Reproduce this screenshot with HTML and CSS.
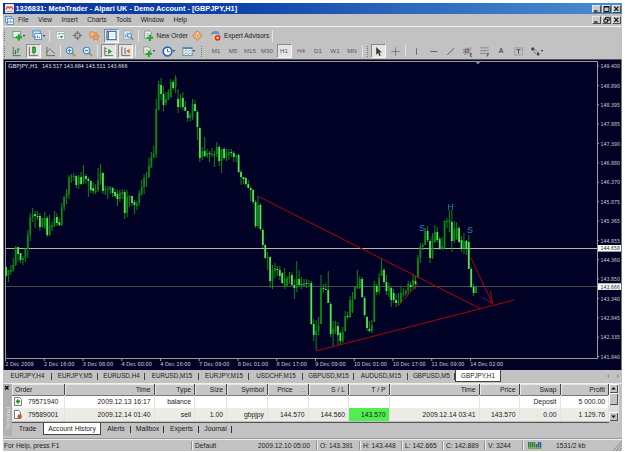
FILE: index.html
```
<!DOCTYPE html>
<html lang="en">
<head>
    <meta charset="UTF-8">
    <meta name="viewport" content="width=device-width, initial-scale=1.0">
    <title>MetaTrader - GBPJPY,H1</title>
    <link rel="stylesheet" href="styles.css">
</head>
<body>

<div class="window">

    <div class="titlebar">
        <svg class="logo" width="9" height="9" viewBox="0 0 9 9"><rect width="9" height="9" rx="1" fill="#f4e4dc"/><path d="M1 5.5Q2.5 1 4.5 4Q6.500 1 8 5.500" fill="none" stroke="#d84a3c" stroke-width="1.300"/><path d="M1.500 7.500h6" stroke="#e89080"/></svg>
        <span class="title">1326831: MetaTrader - Alpari UK - Demo Account - [GBPJPY,H1]</span>
        <span class="winbtns">
            <svg width="9" height="8" viewBox="0 0 9 8"><path d="M2 6h3.500" stroke="#000" stroke-width="1.200"/></svg>
            <svg width="9" height="8" viewBox="0 0 9 8"><path d="M2 1.500h5v5H2zM2 2h5" fill="none" stroke="#000" stroke-width=".9"/></svg>
            <svg width="9" height="8" viewBox="0 0 9 8"><path d="M2.300 1.700l4 4.300M6.300 1.700l-4 4.300" stroke="#000" stroke-width="1.100"/></svg>
        </span>
    </div>

    <div class="menubar">
        <svg class="doc" width="9" height="9" viewBox="0 0 9 9"><rect x=".5" y=".5" width="6" height="6" fill="#dcecf8" stroke="#4a8cc8" stroke-width=".8"/><rect x="2.500" y="2.500" width="6" height="6" fill="#eef6fc" stroke="#4a8cc8" stroke-width=".8"/><path d="M4 7V5M5.500 7V4M7 7V5" stroke="#4a8cc8" stroke-width=".7"/></svg>
        <span>File</span><span>View</span><span>Insert</span><span>Charts</span><span>Tools</span><span>Window</span><span>Help</span>
        <span class="winbtns">
            <svg width="9" height="8" viewBox="0 0 9 8"><path d="M2 6h3.500" stroke="#000" stroke-width="1.200"/></svg>
            <svg width="9" height="8" viewBox="0 0 9 8"><path d="M3.500 3V1.300h3.700v3H5.800M2 3.200h3.500v3H2z" fill="none" stroke="#000" stroke-width=".9"/></svg>
            <svg width="9" height="8" viewBox="0 0 9 8"><path d="M2.300 1.700l4 4.300M6.300 1.700l-4 4.300" stroke="#000" stroke-width="1.100"/></svg>
        </span>
    </div>

    <!-- standard toolbar -->
    <div class="toolbar standard">
        <i class="handle"></i>
        <span class="tool drop"><svg viewBox="0 0 12 12"><rect x="1" y="1.500" width="8" height="6.500" fill="#e8f4e8" stroke="#4a9a50" stroke-width=".8"/><path d="M7.500 4.500v7M4 8h7" stroke="#20a828" stroke-width="2.400"/></svg></span>
        <span class="tool drop"><svg viewBox="0 0 12 12"><rect x="1" y="1" width="8" height="6" fill="#cfe4f6" stroke="#3c80c0" stroke-width=".9"/><rect x="3" y="4" width="7.500" height="6.500" fill="#fff" stroke="#3c80c0" stroke-width=".9"/><path d="M4 9V7M6 9V6M8 9V7" stroke="#3c80c0"/></svg></span>
        <i class="sep"></i>
        <span class="tool"><svg viewBox="0 0 12 12"><rect x="1.500" y="1.500" width="9" height="9" fill="#fafff4" stroke="#8aa" stroke-width=".7"/><path d="M3 5l1.500-2L6 5z" fill="#20a020"/><path d="M5 6.500h4L7 9.500z" fill="#289838"/><path d="M7 4h2.500M3 8h1.500" stroke="#3878c0"/></svg></span>
        <span class="tool"><svg viewBox="0 0 12 12"><circle cx="6" cy="6" r="3" fill="none" stroke="#707070" stroke-width="1.100"/><path d="M6 .8v4M6 7.200v4M.8 6h4M7.200 6h4" stroke="#707070" stroke-width="1.100"/></svg></span>
        <span class="tool"><svg viewBox="0 0 12 12"><path d="M1 2h3l1 1h4v5H1z" fill="#f0b878" stroke="#c07030" stroke-width=".6"/><path d="M7.500 4l1.200 2.400 2.600.3-1.900 1.800.5 2.700-2.400-1.300-2.400 1.300.5-2.700-1.900-1.800 2.600-.3z" fill="#f4a060" stroke="#c06830" stroke-width=".5"/></svg></span>
        <span class="tool on"><svg viewBox="0 0 12 12"><rect x="1" y="1.500" width="10" height="9" fill="#fff" stroke="#3070b8" stroke-width="1.200"/><path d="M2.500 2v8" stroke="#3070b8" stroke-width="1.500"/><path d="M4.500 4.500h5M4.500 7h5" stroke="#b8cce0" stroke-width=".8"/></svg></span>
        <span class="tool"><svg viewBox="0 0 12 12"><rect x="1" y="1" width="7.500" height="9" fill="#e4eef6" stroke="#7aa0c0" stroke-width=".7"/><path d="M2.500 8V5M4.500 8V3" stroke="#5a90b8"/><circle cx="7" cy="6" r="2.300" fill="#c8e4f8" stroke="#4a88b8"/><path d="M8.800 8l2.200 2.500" stroke="#4a88b8" stroke-width="1.400"/></svg></span>
        <i class="sep short"></i>
        <span class="tool"><svg viewBox="0 0 12 12"><path d="M2 1h5l2 2v6H2z" fill="#f2f8f2" stroke="#6a8a6a" stroke-width=".8"/><path d="M3.500 4h3M3.500 6h2" stroke="#888" stroke-width=".7"/><path d="M7.500 5v7M4 8.500h7" stroke="#20a828" stroke-width="2.300"/></svg></span>
        <span class="label order">New Order</span>
        <span class="tool"><svg viewBox="0 0 12 12"><path d="M6 .8L11.200 6 6 11.200.8 6z" fill="#f0b070" stroke="#c87830" stroke-width=".9"/><path d="M6 2.800v1.400M6 5.200v3.800" stroke="#fff" stroke-width="1.500"/><path d="M6 5v4" stroke="#a85818" stroke-width=".6"/></svg></span>
        <span class="tool expert"><svg viewBox="0 0 12 12"><circle cx="5.500" cy="6.500" r="3.500" fill="#f0c090"/><path d="M.8 5Q2 .6 6 1Q10 1.300 10.500 5L6 4z" fill="#4a98d8"/><circle cx="8.300" cy="8.500" r="3.100" fill="#d83018"/><rect x="7.200" y="7.400" width="2.200" height="2.200" fill="#fff"/></svg></span>
        <span class="label">Expert Advisors</span>
        <i class="sep end"></i>
    </div>

    <!-- charts, timeframes and line studies toolbar -->
    <div class="toolbar charts">
        <i class="handle"></i>
        <span class="tool"><svg viewBox="0 0 12 12"><path d="M2.500 1v9.500h8" fill="none" stroke="#555" stroke-width=".9"/><path d="M5 4v5M7.500 2.500v5M7.500 3.500h2M4 7.500h1" stroke="#208038" stroke-width="1.100"/></svg></span>
        <span class="tool on"><svg viewBox="0 0 12 12"><path d="M1.500 1v9.500h9.500" fill="none" stroke="#555" stroke-width=".9"/><path d="M6.500 0v9.500" stroke="#188028"/><rect x="4.800" y="1.500" width="3.400" height="5.500" fill="#30b840" stroke="#188028" stroke-width=".7"/></svg></span>
        <span class="tool"><svg viewBox="0 0 12 12"><path d="M2 1v9.500h9" fill="none" stroke="#555" stroke-width=".9"/><path d="M2 7Q5 1.500 7 4.500T11 8" fill="none" stroke="#4a7a58"/></svg></span>
        <i class="sep short"></i>
        <span class="tool"><svg viewBox="0 0 12 12"><path d="M7.500 7.500l3.500 3.500" stroke="#b89030" stroke-width="2"/><circle cx="5" cy="5" r="3.600" fill="#e4f4ff" stroke="#3888c8" stroke-width="1.200"/><path d="M3 5h4M5 3v4" stroke="#3078b8" stroke-width="1.100"/></svg></span>
        <span class="tool"><svg viewBox="0 0 12 12"><path d="M7.500 7.500l3.500 3.500" stroke="#b89030" stroke-width="2"/><circle cx="5" cy="5" r="3.600" fill="#e4f4ff" stroke="#3888c8" stroke-width="1.200"/><path d="M3 5h4" stroke="#3078b8" stroke-width="1.100"/></svg></span>
        <i class="sep"></i>
        <span class="tool on"><svg viewBox="0 0 12 12"><path d="M2 1v9.500h9M2 3h2M2 6h2" fill="none" stroke="#555" stroke-width=".9"/><path d="M5.500 3l4.500 3-4.500 3z" fill="#28a838"/></svg></span>
        <span class="tool on"><svg viewBox="0 0 12 12"><path d="M2 1v9.500h9M5.500 2v7" fill="none" stroke="#555" stroke-width=".9"/><path d="M10.500 3L7 5.500l3.500 3z" fill="#d86828"/></svg></span>
        <i class="sep"></i>
        <span class="tool drop"><svg viewBox="0 0 12 12"><path d="M2 1h5l2 2v6H2z" fill="#f2f8f2" stroke="#6a8a6a" stroke-width=".8"/><path d="M3.500 6l1.500-2 1.500 1" fill="none" stroke="#666" stroke-width=".7"/><path d="M7.500 5v7M4 8.500h7" stroke="#20a828" stroke-width="2.200"/></svg></span>
        <span class="tool drop"><svg viewBox="0 0 12 12"><circle cx="6" cy="6" r="4.700" fill="#fff" stroke="#2868c0" stroke-width="1.900"/><path d="M6 3v3.200h2.500" fill="none" stroke="#444" stroke-width=".9"/></svg></span>
        <span class="tool drop"><svg viewBox="0 0 12 12"><rect x="1" y="1.500" width="10" height="9" fill="#eaf4fa" stroke="#4888b8" stroke-width=".9"/><path d="M1 2.500h10" stroke="#4888b8" stroke-width="1.600"/><path d="M2.500 6l2-1.500L7 6l2.500-1.500" fill="none" stroke="#d07040" stroke-width=".8"/><path d="M2.500 9l2-1.500L7 9l2.500-1.500" fill="none" stroke="#30a050" stroke-width=".8"/></svg></span>
        <i class="handle frames"></i>
        <span class="tool tf">M1</span><span class="tool tf">M5</span><span class="tool tf">M15</span><span class="tool tf">M30</span><span class="tool tf on">H1</span><span class="tool tf">H4</span><span class="tool tf">D1</span><span class="tool tf">W1</span><span class="tool tf">MN</span>
        <i class="sep last"></i>
        <i class="handle studies"></i>
        <span class="tool on"><svg viewBox="0 0 12 12"><path d="M3.500 1v8.500l2-1.800 1.500 3.300 1.500-.7-1.500-3.100h2.700z" fill="#383838"/></svg></span>
        <span class="tool"><svg viewBox="0 0 12 12"><path d="M6 1.500v9M1.500 6h9" stroke="#707070" stroke-width=".9"/></svg></span>
        <i class="sep"></i>
        <span class="tool"><svg viewBox="0 0 12 12"><path d="M6 2.500v7" stroke="#666"/></svg></span>
        <span class="tool"><svg viewBox="0 0 12 12"><path d="M2.500 6h7.500" stroke="#555"/></svg></span>
        <span class="tool"><svg viewBox="0 0 12 12"><path d="M2.500 9.500l7.500-7" stroke="#555"/></svg></span>
        <span class="tool"><svg viewBox="0 0 12 12"><path d="M1.500 7.500l6-6M2.500 9.500l8-7.500M1 4h8M1.500 6.500H9M4 2v7M6.500 2v7" stroke="#666" stroke-width=".8"/><path d="M11 8H9v3.300h2M9 9.600h1.700" fill="none" stroke="#444" stroke-width=".8"/></svg></span>
        <span class="tool"><svg viewBox="0 0 12 12"><path d="M1.500 2h9M1.500 5h9M1.500 8h6.500" stroke="#666" stroke-width=".9" stroke-dasharray="1.500 .5"/><path d="M11 8H9v3.500M9 9.600h1.700" fill="none" stroke="#444" stroke-width=".8"/></svg></span>
        <span class="tool tf letter">A</span>
        <span class="tool"><svg viewBox="0 0 12 12"><rect x="1.800" y="2" width="8.500" height="8" fill="none" stroke="#777" stroke-width=".8" stroke-dasharray="1 .6"/><path d="M3.800 4h4.500M6 4v4.500" stroke="#444"/></svg></span>
        <span class="tool drop shapes"><svg viewBox="0 0 12 12"><path d="M3 1l2.200 2.200L3 5.400.8 3.200z" fill="#444"/><path d="M4 6l2.500 2.500M5.500 4l2 2" stroke="#666"/><path d="M8.800 6.500l2 2.200-2 2.200-2-2.200z" fill="#444"/></svg></span>
    </div>

    <svg class="chart" id="chart" width="619" height="311" viewBox="3 59 619 311"></svg>

    <div class="chart-tabs">
        <span>EURJPY,H4</span><span>EURJPY,M5</span><span>EURUSD,H4</span><span>EURUSD,M15</span><span>EURJPY,M15</span><span>USDCHF,M15</span><span>GBPUSD,M15</span><span>AUDUSD,M15</span><span>GBPUSD,M5</span><span class="active">GBPJPY,H1</span>
        <svg class="scroll" width="14" height="6" viewBox="0 0 14 6"><path d="M3 1L1 3l2 2zM11 1l2 2-2 2z" fill="#8c8c8c"/></svg>
    </div>

    <div class="terminal">
        <div class="side">
            <svg width="6" height="6" viewBox="0 0 6 6"><path d="M1 1l3.500 3.500M4.500 1L1 4.500" stroke="#000" stroke-width="1.100"/></svg>
            <span>Terminal</span>
        </div>
        <div class="history">
            <div class="row headings">
                <span class="first">Order</span><span>Time</span><span>Type</span><span>Size</span><span>Symbol</span><span class="sorted">Price <svg width="5" height="4" viewBox="0 0 5 4"><path d="M2.500.5l2 3h-4z" fill="#eee" stroke="#888" stroke-width=".5"/></svg></span><span>S / L</span><span>T / P</span><span>Time</span><span>Price</span><span>Swap</span><span>Profit</span>
            </div>
            <div class="row">
                <span class="first"><svg width="8" height="9" viewBox="0 0 8 9"><path d="M.5.500h5l2 2v6h-7z" fill="#fff" stroke="#557" stroke-width=".8"/><path d="M2 4.500h4M4 2.500v4" stroke="#18a020" stroke-width="1.800"/></svg>79571940</span><span>2009.12.13 16:17</span><span>balance</span><span></span><span></span><span></span><span></span><span></span><span></span><span></span><span>Deposit</span><span>5 000.00</span>
            </div>
            <div class="row alt">
                <span class="first"><svg width="8" height="9" viewBox="0 0 8 9"><path d="M.5.500h4l2 2v6h-6z" fill="#fff" stroke="#557" stroke-width=".8"/><circle cx="5.700" cy="6.500" r="2.200" fill="#c85820"/></svg>79589001</span><span>2009.12.14 01:40</span><span>sell</span><span>1.00</span><span>gbpjpy</span><span>144.570</span><span>144.560</span><span class="hit">143.570</span><span>2009.12.14 03:41</span><span>143.570</span><span>0.00</span><span>1 129.76</span>
            </div>
            <div class="pages">
                <span>Trade</span><span class="active">Account History</span><span>Alerts</span><span>Mailbox</span><span>Experts</span><span>Journal</span>
            </div>
        </div>
        <div class="scrollbar">
            <svg width="9" height="9" viewBox="0 0 9 9"><path d="M2.300 5.500h4.400L4.500 3z" fill="#000"/></svg>
            <b></b>
            <svg width="9" height="9" viewBox="0 0 9 9"><path d="M2.300 3.500h4.400L4.500 6z" fill="#000"/></svg>
        </div>
    </div>

    <div class="status">
        <span>For Help, press F1</span><span>Default</span><span class="plain">2009.12.10 05:00</span><span>O: 143.391</span><span>H: 143.448</span><span>L: 142.665</span><span>C: 142.889</span><span>V: 3244</span>
        <span><svg width="14" height="7" viewBox="0 0 14 7"><path d="M.5 0v7M2.500 0v7M4.500 0v7M6.500 0v7" stroke="#288038" stroke-width="1.500"/><path d="M8.500 2v5M10.500 0v7M12.500 0v7" stroke="#2858a0" stroke-width="1.500"/><path d="M0 6h14" stroke="#a8c830"/></svg></span>
        <span class="plain">1531/2 kb</span>
        <svg class="grip" width="9" height="11" viewBox="0 0 9 11"><path d="M0 11l9-10M3 11l6-6.700M6 11l3-3.300" stroke="#808080" stroke-width=".9"/></svg>
    </div>

</div>

<script src="chart.js"></script>
</body>
</html>
```

FILE: styles.css
```
body {
    margin: 0;
    background: #fff;
    font-family: "Liberation Sans", Arial, sans-serif;
    font-size: 6.8px;
    line-height: 8px;
    color: #1c1c1c;
    overflow: hidden;
}

.window {
    width: 619px;
    height: 448px;
    margin: 3px 0 0 3px;
    background: #c2c2c2;
    display: flex;
    flex-direction: column;
    white-space: nowrap;
}

svg {
    display: block;
    flex: none;
}

/* title and menu */
.titlebar {
    height: 11px;
    display: flex;
    align-items: center;
    background: linear-gradient(to right, #0c389c, #0d42ac 38%, #2c68bc 65%, #4c8cd0);
    color: #fff;
    font-weight: bold;
}

.logo {
    margin-left: 2px;
}

.title {
    margin-left: 1.5px;
    font-size: 7.3px;
    letter-spacing: 0.02px;
}

.winbtns {
    margin-left: auto;
    margin-right: 1px;
    display: flex;
    gap: 1px;
}

.winbtns svg {
    background: #c8c8c8;
    box-shadow: inset 0.5px 0.5px #fff, inset -1px -1px #505050;
}

.winbtns svg:last-child {
    margin-left: 0.5px;
}

.menubar {
    height: 12px;
    display: flex;
    align-items: center;
    border-bottom: 1px solid #f4f4f4;
    font-size: 6.6px;
}

.menubar .doc {
    margin: 0 4px 0 2px;
}

.menubar > span:not(.winbtns) {
    margin-right: 9.3px;
}

/* toolbars */
.toolbar {
    display: flex;
    align-items: center;
}

.standard {
    height: 15px;
    padding-top: 1px;
}

.charts {
    height: 16px;
}

.handle {
    flex: none;
    width: 1px;
    height: 11px;
    margin: 0 1.5px 0 1px;
    border-left: 1px dotted #777;
}

.frames {
    margin: 0 5px 0 3px;
}

.studies {
    margin: 0 1px 0 2px;
}

.sep {
    flex: none;
    width: 1px;
    height: 12px;
    margin: 0 1.5px;
    background: #969696;
    border-right: 1px solid #e4e4e4;
    box-sizing: border-box;
}

.sep.short {
    margin: 0 1px;
}

.sep.last {
    margin: 0 2px 0 1px;
}

.sep.end {
    margin-left: 3px;
}

.tool {
    flex: none;
    width: 17px;
    height: 14px;
    display: flex;
    align-items: center;
    justify-content: center;
}

.tool svg {
    width: 11px;
    height: 11px;
}

.tool.on {
    width: 13px;
    height: 12px;
    margin: 0 1px;
    background: #e4e4e2;
    border: 1px solid;
    border-color: #8a8a8a #f8f8f8 #f8f8f8 #8a8a8a;
}

.drop::after {
    content: "";
    border: 1.5px solid transparent;
    border-top: 2px solid #222;
    border-bottom: 0;
    margin-right: -3px;
}

.drop {
    width: 18.5px;
    box-sizing: border-box;
    margin-right: 1.5px;
}

.shapes {
    margin-left: -1px;
}

.tf {
    font-size: 6.2px;
    color: #585858;
}

.letter {
    font-weight: bold;
    font-size: 7px;
}

.label {
    font-size: 6.5px;
}

.order {
    width: 32px;
}

.expert {
    margin-left: 1.5px;
}

.chart {
    background: #020226;
}

/* chart window tabs */
.chart-tabs {
    height: 12px;
    display: grid;
    grid-template-columns: 49px 46px 47px 54px 50px 54px 51px 54px 47px 46px;
    position: relative;
    font-size: 6.3px;
    line-height: 12px;
    text-align: center;
}

.chart-tabs span {
    background: linear-gradient(#444, #444) right center / 1px 7px no-repeat;
}

.chart-tabs .active {
    background: #fff;
    border: 1px solid #444;
    border-top: 0;
    box-sizing: border-box;
    line-height: 11px;
}

.scroll {
    position: absolute;
    right: 2px;
    top: 3px;
}

/* terminal */
.terminal {
    height: 52px;
    display: flex;
    border-top: 1px solid #eee;
    margin-top: 1px;
    background: #c2c2c2;
}

.side {
    width: 9px;
    padding-top: 1px;
    box-sizing: border-box;
    background: #b0b0b0;
}

.side svg {
    margin-left: 1px;
}

.side span {
    display: block;
    writing-mode: vertical-rl;
    transform: rotate(180deg);
    margin: 16px 0 0 1px;
    font-size: 6px;
    color: #e2e2e2;
}

.history {
    width: 597px;
}

.row {
    height: 13px;
    display: grid;
    grid-template-columns: 52.5px 90px 40.5px 32px 41px 40.5px 40.5px 40.5px 90px 40px 41px 48.5px;
    background: #fff;
    line-height: 13px;
    text-align: right;
}

.row span {
    padding-right: 3px;
    border-right: 1px solid #e2e2e2;
}

.row .first {
    display: flex;
    align-items: center;
    gap: 6px;
    padding-left: 2px;
}

.row.headings {
    height: 11px;
    line-height: 11px;
    background: #c6c6c6;
}

.headings span {
    border-right-color: #444;
    border-bottom: 1px solid #777;
    box-shadow: inset 1px 1px #e8e8e8;
}

.headings .first {
    padding-left: 3px;
}

.sorted svg {
    display: inline-block;
    margin-left: 5px;
}

.row.alt {
    background: #ecebe6;
}

.row .hit {
    background: #50ee50;
}

.pages {
    height: 13px;
    margin-top: 1px;
    border-top: 1px solid #555;
    display: grid;
    grid-template-columns: 31px 58px 30px 33px 35px 33px;
    box-sizing: border-box;
    line-height: 12px;
    text-align: center;
}

.pages span {
    background: linear-gradient(#333, #333) right center / 1px 7px no-repeat;
}

.pages span:first-child {
    background: none;
}

.pages .active {
    background: #fff;
    border: 1px solid #444;
    border-top: 0;
    box-sizing: border-box;
    line-height: 11px;
}

.scrollbar {
    width: 10px;
    height: 37px;
    background: #dededc;
    display: flex;
    flex-direction: column;
}

.scrollbar svg,
.scrollbar b {
    width: 9px;
    background: #c4c4c4;
    box-shadow: inset 1px 1px #fff, inset -1px -1px #505050;
}

.scrollbar b {
    height: 12px;
}

.scrollbar svg:last-child {
    margin-top: auto;
}

/* status bar */
.status {
    flex: 1;
    display: grid;
    grid-template-columns: 188px 66px 59px 43px 42px 41px 42px 38px 33px 58px auto;
    align-items: center;
    border-top: 1px solid #999;
    margin-top: 2px;
    box-shadow: inset 0 1px #eee;
    font-size: 6.7px;
}

.status span {
    height: 9px;
    line-height: 9px;
    padding-left: 3px;
    border-left: 1px solid #929292;
    box-shadow: inset 1px 0 #eee;
}

.status span:first-child,
.status .plain {
    padding-left: 1px;
    border: 0;
    box-shadow: none;
}

.status span svg {
    margin: 1px 0 0 2px;
}

.grip {
    justify-self: end;
    align-self: end;
}
```

FILE: chart.js
```
// bars as [high, low, open, close], already in chart y units
const bars = [
    [267,277,267,276],[271,282,275,270],[265,275,272,270],[258,272,270,265],[246,266,265,247],[247,262,247,254],
    [253,263,253,260],[256,265,260,258],[248,262,258,249],[230,258,249,235],[213,241,235,217],[208,222,217,215],
    [211,228,214,216],[211,220,216,217],[213,231,216,227],[219,228,227,218],[212,229,227,218],[216,237,218,235],
    [215,236,235,226],[222,231,227,225],[211,227,226,218],[213,226,217,223],[218,226,222,225],[203,226,225,207],
    [196,211,207,197],[189,204,197,193],[175,199,194,177],[174,183,177,176],[173,181,176,176],[175,188,176,185],
    [175,189,184,177],[172,185,177,184],[165,184,183,176],[174,184,176,179],[177,197,179,181],[180,193,181,190],
    [182,194,188,191],[184,194,192,190],[168,192,190,180],[164,185,180,173],[172,194,173,191],[186,195,190,189],
    [186,199,190,189],[186,194,189,187],[187,197,188,193],[189,198,192,196],[190,206,194,199],[190,202,199,193],
    [189,199,194,192],[190,219,192,213],[190,217,213,197],[195,207,198,196],[196,206,196,203],[200,214,202,205],
    [201,210,206,203],[190,206,203,193],[180,196,194,187],[174,194,187,178],[172,187,178,177],[158,178,177,166],
    [152,168,167,157],[146,158,157,154],[99,158,154,109],[81,110,110,84],[78,100,85,94],[86,111,94,105],
    [92,106,103,99],[89,100,100,92],[79,98,97,82],[80,90,82,88],[75,93,87,78],[89,113,99,107],
    [94,108,107,98],[92,110,98,107],[101,111,107,111],[111,122,111,118],[113,121,118,115],[99,120,117,104],
    [100,112,104,111],[110,140,112,127],[127,162,128,158],[147,160,157,151],[137,157,151,156],[149,158,156,153],
    [151,162,153,154],[148,157,154,154],[151,167,156,154],[142,157,154,147],[145,166,147,161],[149,173,161,149],
    [147,160,149,158],[149,161,158,153],[149,160,155,152],[149,157,152,153],[151,162,153,157],[154,162,156,156],
    [154,173,155,172],[170,185,172,177],[177,184,177,179],[177,186,178,184],[180,188,184,188],[186,201,188,190],
    [189,204,190,202],[200,228,202,226],[196,228,226,205],[203,231,205,229],[228,248,230,245],[244,259,245,258],
    [252,270,258,257],[256,288,257,281],[265,289,281,270],[263,278,271,268],[266,276,269,270],[266,280,270,276],
    [272,284,273,283],[268,289,287,279],[276,286,286,278],[272,284,279,276],[272,286,275,285],[279,299,285,288],
    [261,292,288,279],[270,287,279,285],[277,289,284,285],[279,287,286,283],[279,288,283,284],[280,286,284,283],
    [281,325,283,324],[319,341,324,335],[320,350,335,331],[317,335,331,325],[275,324,324,288],[284,293,288,289],
    [283,290,289,290],[271,303,290,303],[302,337,304,334],[321,346,334,329],[321,334,332,326],[322,345,326,335],
    [331,344,333,341],[327,343,341,332],[311,332,331,316],[312,319,316,317],[296,318,317,300],[292,313,312,300],
    [286,300,299,287],[270,289,287,287],[276,289,288,279],[277,298,279,297],[296,317,298,315],[316,331,317,328],
    [321,332,329,331],[320,333,331,325],[281,322,322,285],[284,295,286,292],[273,294,292,278],[258,276,276,270],
    [268,284,270,282],[275,295,282,291],[283,297,291,287],[286,307,288,300],[289,303,293,300],[294,307,300,303],
    [293,306,303,302],[287,303,303,293],[288,297,294,293],[289,296,294,291],[281,295,291,284],[282,292,285,287],
    [274,290,287,280],[276,289,281,284],[255,278,278,258],[243,263,258,246],[243,250,247,245],[228,245,245,231],
    [226,242,231,240],[239,263,241,258],[233,259,258,236],[225,243,242,232],[227,242,232,240],[237,250,239,249],
    [237,250,249,246],[220,249,248,221],[218,228,222,221],[210,232,222,220],[210,252,222,241],[221,243,241,229],
    [222,240,239,228],[226,243,228,242],[236,252,240,249],[233,254,248,241],[240,255,241,249],[235,269,242,269],
    [267,288,269,287],[284,296,287,293],[286,293,293,287]
];

const prices = ['149.400', '148.890', '148.395', '147.885', '147.390', '146.880', '146.370', '145.875',
    '145.365', '144.855', '144.360', '143.850', '143.340', '142.845', '142.335', '141.840'];
const times = ['2 Dec 2009', '2 Dec 16:00', '3 Dec 08:00', '4 Dec 00:00', '4 Dec 16:00', '7 Dec 09:00', '8 Dec 01:00',
    '8 Dec 17:00', '9 Dec 09:00', '10 Dec 01:00', '10 Dec 17:00', '11 Dec 09:00', '14 Dec 02:00'];

const text = (x, y, w, fill, str) =>
    `<text x="${x}" y="${y}" textLength="${w}" lengthAdjust="spacingAndGlyphs" fill="${fill}" font-family="DejaVu Sans" font-size="5.6">${str}</text>`;
const line = (x1, y1, x2, y2, color, w = 1) =>
    `<line x1="${x1}" y1="${y1}" x2="${x2}" y2="${y2}" stroke="${color}" stroke-width="${w}"/>`;

let out = '';

// frame
out += line(3, 59.5, 622, 59.5, '#555') + line(3.5, 59, 3.5, 370, '#777') + line(621.5, 59, 621.5, 370, '#777');
out += '<path d="M5.500 358.500V61.500H597.500V358.500Z" fill="none" stroke="#9c9c94"/>';
out += '<path d="M475 61h6l-3 3.500z" fill="#7c9494"/>';

// price levels
out += line(6, 248.5, 597, 248.5, '#b8b4a0') + line(6, 286.5, 597, 286.5, '#4c4c48');

bars.forEach(([high, low, open, close], i) => {
    const x = 6 + i * 2.423;
    const down = close > open;
    const top = Math.min(open, close);
    const h = Math.max(1, Math.abs(close - open));
    out += line(x, high, x, low, '#0a960e', 0.9);
    out += `<rect x="${(x - 0.9).toFixed(2)}" y="${top}" width="1.8" height="${h}" fill="${down ? '#54e454' : '#0b880f'}"/>`;
});

// trend lines and target arrow
out += line(257.5, 196, 480, 308.5, '#a80808') + line(316, 351, 514, 300, '#a80808');
out += line(398.5, 305.5, 418.5, 283, '#a80808') + line(470.5, 257, 492.5, 303.5, '#a80808');
out += line(490.3, 291, 492.5, 303.5, '#a80808') + line(487, 300, 492.5, 303.5, '#a80808') + line(481.5, 297, 487, 300, '#5008a0');

[['S', 422, 230.7], ['H', 450.5, 209.5], ['S', 470, 232.7]].forEach(([s, x, y]) => {
    out += `<text x="${x}" y="${y}" text-anchor="middle" fill="#3484c0" font-family="Liberation Sans" font-size="8.5">${s}</text>`;
});

// scales
prices.forEach((p, i) => {
    const y = 66 + i * 19.37;
    out += line(597, y, 599, y, '#9c9c94') + text(600.6, y + 2.2, 19.4, '#d0d0d0', p);
});
times.forEach((t, i) => {
    const x = 5.5 + i * 38.75;
    out += line(x, 359, x, 361, '#9c9c94') + text(x - 0.3, 365.7, t.length > 11 ? 33 : i ? 30.5 : 28.5, '#d0d0d0', t);
});
[['144.658', 248.3], ['143.666', 286.6]].forEach(([p, y]) => {
    out += `<rect x="598" y="${y - 3.3}" width="23" height="6.600" fill="#fff"/>` + text(600.6, y + 2.1, 19.4, '#222', p);
});

out += text(8, 68, 30, '#e0e0e0', 'GBPJPY,H1') + text(42, 68, 85.5, '#e0e0e0', '143.517 143.684 143.511 143.666');

document.getElementById('chart').innerHTML = out;
```
